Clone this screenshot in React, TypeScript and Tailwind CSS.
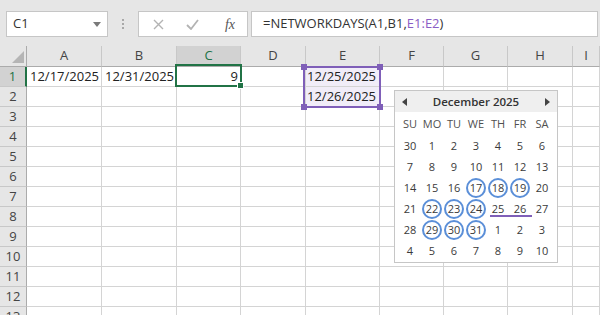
import React from "react";

const font = { fontFamily: '"Open Sans", "Noto Sans", sans-serif' };

const cols = ["A", "B", "C", "D", "E", "F", "G", "H", "I"];

const weeks: number[][] = [
  [30, 1, 2, 3, 4, 5, 6],
  [7, 8, 9, 10, 11, 12, 13],
  [14, 15, 16, 17, 18, 19, 20],
  [21, 22, 23, 24, 25, 26, 27],
  [28, 29, 30, 31, 1, 2, 3],
  [4, 5, 6, 7, 8, 9, 10],
];
const circled = new Set(["2-17", "2-18", "2-19", "3-22", "3-23", "3-24", "4-29", "4-30", "4-31"]);

function Calendar() {
  return (
    <div className="absolute left-[394px] top-[90px] z-20 w-[164px] h-[173px] border border-[#c6c6c6] bg-white">
      <div className="flex h-[21px] items-center justify-between bg-[#efefef] px-[7px]">
        <svg width="5" height="8" viewBox="0 0 5 8">
          <polygon points="5,0 5,8 0,4" fill="#444" />
        </svg>
        <span className="text-[11.5px] font-semibold text-[#333]">December 2025</span>
        <svg width="5" height="8" viewBox="0 0 5 8">
          <polygon points="0,0 0,8 5,4" fill="#444" />
        </svg>
      </div>
      <div className="px-[4px] pt-[2px]">
        <div className="grid grid-cols-7 h-[21px] text-[11px] text-[#505050]">
          {["SU", "MO", "TU", "WE", "TH", "FR", "SA"].map((d) => (
            <div key={d} className="flex items-center justify-center">
              {d}
            </div>
          ))}
        </div>
        {weeks.map((w, wi) => (
          <div key={wi} className="grid grid-cols-7 h-[21px] text-[11px] text-[#3a3a3a]">
            {w.map((d, di) => {
              const c = circled.has(`${wi}-${d}`);
              const u = wi === 3 && (d === 25 || d === 26);
              return (
                <div key={di} className="relative flex items-center justify-center pt-[1px]">
                  {c && (
                    <span className="absolute left-1/2 top-1/2 h-[20px] w-[20px] -translate-x-1/2 -translate-y-1/2 rounded-full border-2 border-[#5b8fd8]" />
                  )}
                  <span className="relative">{d}</span>
                  {u && d === 25 && (
                    <span className="absolute bottom-[2px] left-[3px] right-0 h-[2px] bg-[#7f5fb8]" />
                  )}
                  {u && d === 26 && (
                    <span className="absolute bottom-[2px] left-0 right-[-1px] h-[2px] bg-[#7f5fb8]" />
                  )}
                </div>
              );
            })}
          </div>
        ))}
      </div>
    </div>
  );
}

function Toolbar() {
  return (
    <div className="flex h-[46px] items-start bg-[#e6e6e6] pt-[11px] pl-[6px]">
      <div className="flex h-[26px] w-[102px] items-center justify-between border border-[#c6c6c6] bg-white pl-[6px] pr-[6px]">
        <span className="text-[13px] text-[#333]">C1</span>
        <span className="h-0 w-0 border-l-[4px] border-r-[4px] border-t-[5px] border-l-transparent border-r-transparent border-t-[#7a7a7a]" />
      </div>
      <div className="flex h-[26px] w-[30px] flex-col items-center justify-center gap-[2px]">
        <span className="h-[2px] w-[2px] bg-[#a8a8a8]" />
        <span className="h-[2px] w-[2px] bg-[#a8a8a8]" />
        <span className="h-[2px] w-[2px] bg-[#a8a8a8]" />
      </div>
      <div className="flex h-[26px] w-[110px] items-center border border-[#c6c6c6] bg-white">
        <div className="flex w-[38px] justify-center">
          <svg width="11" height="11" viewBox="0 0 11 11">
            <path d="M1 1 L10 10 M10 1 L1 10" stroke="#b3b3b3" strokeWidth="1.4" />
          </svg>
        </div>
        <div className="flex w-[30px] justify-center">
          <svg width="13" height="11" viewBox="0 0 13 11">
            <path d="M1 6 L5 10 L12 1" stroke="#b3b3b3" strokeWidth="1.8" fill="none" />
          </svg>
        </div>
        <div className="flex flex-1 justify-center pl-[6px]">
          <span
            className="text-[14px] italic text-[#555]"
            style={{ fontFamily: '"Liberation Serif", "DejaVu Serif", serif' }}
          >
            fx
          </span>
        </div>
      </div>
      <div className="ml-[3px] flex h-[26px] w-[347px] items-center border border-[#c6c6c6] bg-white pl-[11px]">
        <span className="text-[13px] text-[#333]">
          =NETWORKDAYS(A1,B1,<span className="text-[#8a5cc4]">E1:E2</span>)
        </span>
      </div>
    </div>
  );
}

function Sheet() {
  const rows = Array.from({ length: 13 }, (_, i) => i + 1);
  const values: Record<string, string> = {
    A1: "12/17/2025",
    B1: "12/31/2025",
    C1: "9",
    E1: "12/25/2025",
    E2: "12/26/2025",
  };
  return (
    <div className="grid grid-cols-[27px_75px_75px_64px_65px_74px_64px_64px_65px_1fr] bg-white">
      <div className="relative h-[21px] border-r border-b border-[#ababab] bg-[#e6e6e6]">
        <svg className="absolute right-[2px] bottom-[3px]" width="12" height="12" viewBox="0 0 12 12">
          <polygon points="12,0 12,12 0,12" fill="#b5b5b5" />
        </svg>
      </div>
      {cols.map((c) => (
        <div
          key={c}
          className={
            c === "C"
              ? "flex h-[21px] items-center justify-center border-r border-b border-r-[#c8c8c8] border-b-[#ababab] bg-[#d2d2d2] text-[13px] text-[#217346]"
              : "flex h-[21px] items-center justify-center border-r border-b border-r-[#c8c8c8] border-b-[#ababab] bg-[#e6e6e6] text-[13px] text-[#444]"
          }
        >
          {c}
        </div>
      ))}
      {rows.map((r) => (
        <React.Fragment key={r}>
          <div
            className={
              r === 1
                ? "flex h-[20px] items-center justify-center border-b border-r-2 border-b-[#c8c8c8] border-r-[#217346] bg-[#d2d2d2] text-[13px] text-[#217346]"
                : "flex h-[20px] items-center justify-center border-r border-b border-r-[#ababab] border-b-[#c8c8c8] bg-[#e6e6e6] text-[13px] text-[#444]"
            }
          >
            {r}
          </div>
          {cols.map((c) => {
            const key = `${c}${r}`;
            const inRange = c === "E" && (r === 1 || r === 2);
            return (
              <div
                key={key}
                className={
                  inRange
                    ? "relative flex h-[20px] items-center justify-end border-r border-b border-[#d4d4d4] bg-[#f1edf8] pr-[3px] text-[13px] text-[#222]"
                    : "relative flex h-[20px] items-center justify-end border-r border-b border-[#d4d4d4] pr-[2px] text-[13px] text-[#222]"
                }
              >
                {values[key] ?? ""}
                {key === "C1" && (
                  <div className="absolute left-[-2px] top-[-3px] z-10 h-[23px] w-[67px] border-2 border-[#217346]">
                    <span className="absolute right-[-4px] bottom-[-4px] h-[7px] w-[7px] border border-white bg-[#217346]" />
                  </div>
                )}
                {key === "E1" && (
                  <div className="absolute left-[-3px] top-[-1px] z-10 h-[42px] w-[78px] border-2 border-[#7f5fb8]">
                    <span className="absolute left-[-4px] top-[-4px] h-[6px] w-[6px] bg-[#7f5fb8]" />
                    <span className="absolute right-[-4px] top-[-4px] h-[6px] w-[6px] bg-[#7f5fb8]" />
                    <span className="absolute left-[-4px] bottom-[-4px] h-[6px] w-[6px] bg-[#7f5fb8]" />
                    <span className="absolute right-[-4px] bottom-[-4px] h-[6px] w-[6px] bg-[#7f5fb8]" />
                  </div>
                )}
              </div>
            );
          })}
        </React.Fragment>
      ))}
    </div>
  );
}

export default function App() {
  return (
    <div className="relative h-[315px] w-[600px] overflow-hidden bg-white" style={font}>
      <Toolbar />
      <Sheet />
      <Calendar />
    </div>
  );
}
